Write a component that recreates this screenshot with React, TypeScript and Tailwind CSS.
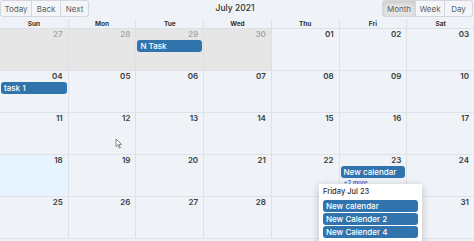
import React from 'react';

type Cell = { day: string; off?: boolean; today?: boolean; events?: string[]; more?: string };

const weeks: Cell[][] = [
  [
    { day: '27', off: true },
    { day: '28', off: true },
    { day: '29', off: true, events: ['N Task'] },
    { day: '30', off: true },
    { day: '01' },
    { day: '02' },
    { day: '03' },
  ],
  [
    { day: '04', events: ['task 1'] },
    { day: '05' },
    { day: '06' },
    { day: '07' },
    { day: '08' },
    { day: '09' },
    { day: '10' },
  ],
  [
    { day: '11' },
    { day: '12' },
    { day: '13' },
    { day: '14' },
    { day: '15' },
    { day: '16' },
    { day: '17' },
  ],
  [
    { day: '18', today: true },
    { day: '19' },
    { day: '20' },
    { day: '21' },
    { day: '22' },
    { day: '23', events: ['New calendar'], more: '+2 more' },
    { day: '24' },
  ],
  [
    { day: '25' },
    { day: '26' },
    { day: '27' },
    { day: '28' },
    { day: '29' },
    { day: '30' },
    { day: '31' },
  ],
];

const days = ['Sun', 'Mon', 'Tue', 'Wed', 'Thu', 'Fri', 'Sat'];

function Btn({ label, w, active, first, last }: { label: string; w: string; active?: boolean; first?: boolean; last?: boolean }) {
  return (
    <button
      className={
        'h-[17px] border border-[#d4d7dc] text-[8px] text-[#5a5f66] -ml-px ' +
        w +
        ' ' +
        (first ? 'rounded-l-[3px] ml-0 ' : '') +
        (last ? 'rounded-r-[3px] ' : '') +
        (active ? 'bg-[#e4e4e4] shadow-[inset_0_2px_4px_rgba(0,0,0,0.12)]' : 'bg-[#f3f5f8]')
      }
    >
      {label}
    </button>
  );
}

function Event({ title }: { title: string }) {
  return (
    <div className="h-[12px] mx-px rounded-[3px] bg-[#3174ad] text-white text-[8px] leading-[12px] px-[3px] font-medium truncate">
      {title}
    </div>
  );
}

export default function App() {
  return (
    <div
      className="relative w-[474px] h-[241px] overflow-hidden bg-[#eff2f7] text-[#373a3c]"
      style={{ fontFamily: 'Inter, "Liberation Sans", sans-serif' }}
    >
      {/* Toolbar */}
      <div className="flex items-center h-[17px] mb-[2px]">
        <div className="flex w-[160px]">
          <Btn label="Today" w="w-[32px]" first />
          <Btn label="Back" w="w-[30px]" />
          <Btn label="Next" w="w-[29px]" last />
        </div>
        <div className="flex-1 text-center text-[8.5px] font-medium text-[#333] pr-[4px]">July 2021</div>
        <div className="flex w-[160px] justify-end pr-px">
          <Btn label="Month" w="w-[34px]" first active />
          <Btn label="Week" w="w-[30px]" />
          <Btn label="Day" w="w-[29px]" last />
        </div>
      </div>

      {/* Header */}
      <div className="grid grid-cols-7 h-[10px] border-b border-[#dde1e7]">
        {days.map((d, i) => (
          <div
            key={d}
            className={'text-center text-[6.5px] font-bold text-[#333] leading-[10px] ' + (i > 0 ? 'border-l border-[#dde1e7]' : '')}
          >
            {d}
          </div>
        ))}
      </div>

      {/* Weeks */}
      {weeks.map((week, w) => (
        <div key={w} className="grid grid-cols-7 h-[42px] border-b border-[#dfe3e9]">
          {week.map((c, i) => (
            <div
              key={i}
              className={
                'flex flex-col ' +
                (i > 0 ? 'border-l border-[#dde1e7] ' : '') +
                (c.off ? 'bg-[#e6e6e6] ' : c.today ? 'bg-[#e7f3fd] ' : '')
              }
            >
              <div
                className={
                  'text-right pr-[5px] h-[11px] leading-[11px] text-[8px] font-semibold ' +
                  (c.off ? 'text-[#a8a8a8] font-normal' : 'text-[#3a3d40]')
                }
              >
                {c.day}
              </div>
              {c.events?.map((e) => <Event key={e} title={e} />)}
              {c.more && (
                <div className="text-[6px] font-semibold text-[#3b6fd0] pl-[4px] leading-[9px]">{c.more}</div>
              )}
            </div>
          ))}
        </div>
      ))}

      {/* Popup */}
      <div className="absolute left-[319px] top-[184px] w-[103px] h-[70px] bg-white shadow-[0_2px_8px_rgba(0,0,0,0.22)] px-[3px] pt-[2px] flex flex-col gap-px">
        <div className="text-[7.5px] font-medium text-[#333] leading-[11px] pl-[1px] mb-[2px]">Friday Jul 23</div>
        <Event title="New calendar" />
        <Event title="New Calender 2" />
        <Event title="New Calender 4" />
      </div>

      {/* Cursor */}
      <svg className="absolute left-[115px] top-[138px]" width="8" height="11" viewBox="0 0 8 11">
        <path d="M1 1 L1 8.5 L2.8 6.8 L4.2 10 L5.4 9.5 L4 6.4 L6.6 6.4 Z" fill="#fff" stroke="#666" strokeWidth="0.8" />
      </svg>
    </div>
  );
}
